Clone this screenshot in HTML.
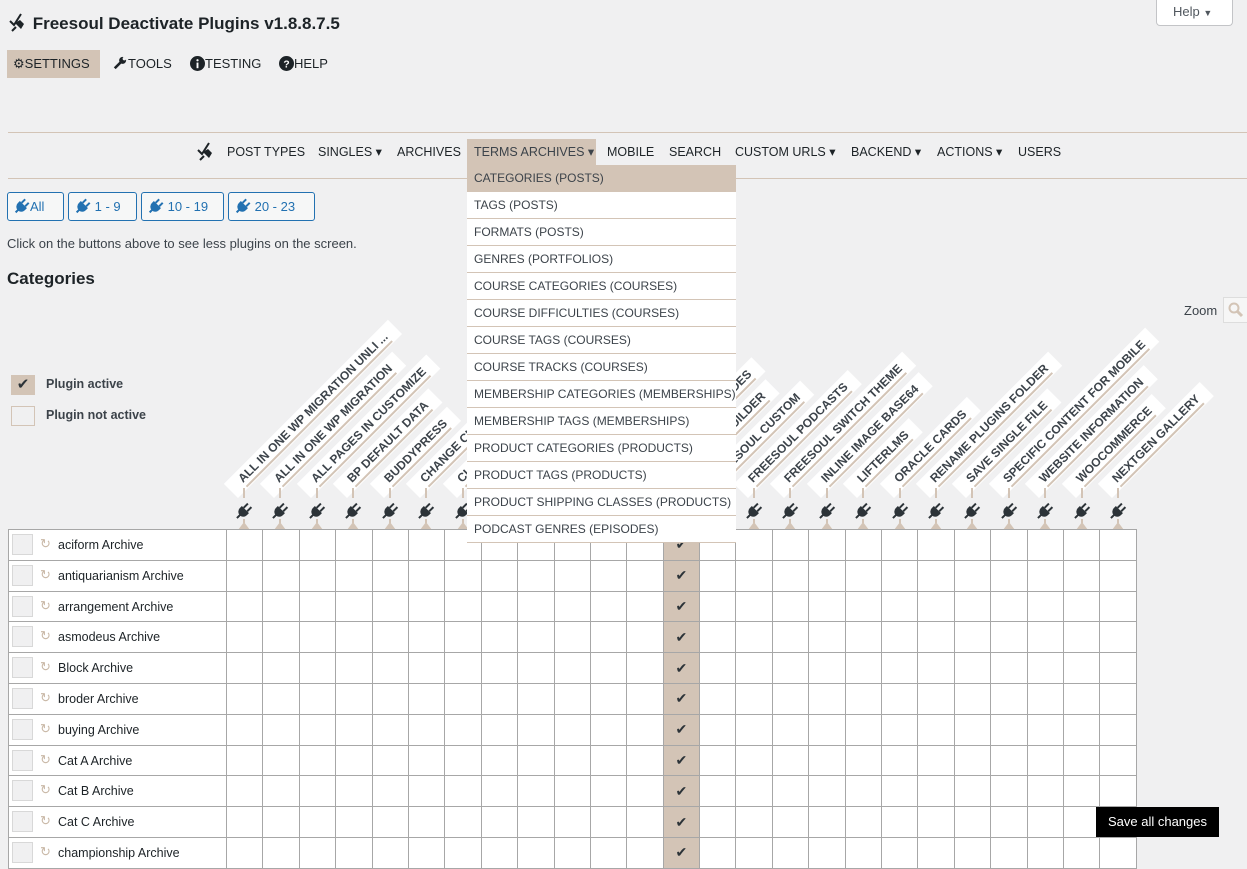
<!DOCTYPE html>
<html><head><meta charset="utf-8"><style>
*{box-sizing:border-box}
body{margin:0;width:1247px;height:851px;overflow:hidden;background:#f0f0f1;font-family:"Liberation Sans",sans-serif;color:#1d2327;position:relative}
.abs{position:absolute}
.title{left:8px;top:12px;font-size:17px;font-weight:bold;color:#1d2327}
.tab{top:50px;height:28px;font-size:13px;line-height:28px;padding:0 6px;color:#1d2327}
.hr{left:8px;right:0;height:1px;background:#d3c4b6}
.nav{top:139px;height:26px;line-height:26px;font-size:12.5px;color:#1d2327}
.btn{top:192px;height:29px;border:1px solid #2271b1;border-radius:3px;background:#f6f7f7;color:#2271b1;font-size:13px;line-height:27px;padding:0 8px 0 6px;white-space:nowrap}
.btn svg{vertical-align:-3px}
.dd{position:absolute;left:467px;top:165px;width:269px;background:#fff;z-index:5}
.dd div{height:27px;line-height:26px;padding-left:7px;font-size:12px;color:#3c434a;border-bottom:1px solid #d3c4b6;white-space:nowrap;overflow:hidden}
.lab{position:absolute;height:20px;background:#fff;transform-origin:0 100%;transform:rotate(-45deg);white-space:nowrap;font-size:12px;font-weight:bold;color:#3c434a;padding:3px 12px 0 14px;line-height:13px}
.lab span{border-bottom:2px solid #d3c4b6;padding-bottom:1px}
table{position:absolute;left:8px;top:529px;border-collapse:collapse;background:#fff}
td{border:1px solid #a7a7a7;width:36.4px;height:30.8px;padding:0;font-size:12.5px;color:#1d2327}
td.n{width:218px;position:relative}
.cb{position:absolute;left:3px;top:4px;width:21px;height:21px;border:1px solid #d8d8d8;background:#f0f0f1}
.rf{position:absolute;left:31px;top:6px;color:#c9b8a6;font-size:13px}
.tx{position:absolute;left:49px;top:8px}
td.on{background:#d3c4b6;text-align:center;font-size:14px;color:#2c3338}
</style></head><body>
<div class="abs title"><svg width="20" height="20" viewBox="0 0 20 20" style="vertical-align:-3px"><path d="M2 9l4 4 7-11" stroke="#1d2327" stroke-width="2" fill="none"/><path d="M7 11l5-3 4 4-3 5z" fill="#1d2327"/><path d="M8 15l-4 4" stroke="#1d2327" stroke-width="2"/></svg> Freesoul Deactivate Plugins v1.8.8.7.5</div>
<div class="abs" style="left:1156px;top:0;width:77px;height:26px;background:#fff;border:1px solid #c3c4c7;border-top:none;border-radius:0 0 4px 4px;font-size:13px;color:#50575e;line-height:24px;padding-left:16px">Help <span style="font-size:9px">▼</span></div>
<div class="abs tab" style="left:7px;width:93px;background:#d3c4b6">⚙SETTINGS</div>
<div class="abs tab" style="left:106px"><svg width="16" height="14" viewBox="0 0 16 16" style="vertical-align:-2px"><path d="M2 14l7-7" stroke="#1d2327" stroke-width="3"/><circle cx="11" cy="5" r="4" fill="#1d2327"/><circle cx="13" cy="3" r="2" fill="#f0f0f1"/></svg>TOOLS</div>
<div class="abs tab" style="left:184px"><svg width="15" height="15" viewBox="0 0 16 16" style="vertical-align:-3px"><circle cx="8" cy="8" r="8" fill="#1d2327"/><rect x="7" y="7" width="2" height="6" fill="#fff"/><circle cx="8" cy="4.5" r="1.2" fill="#fff"/></svg>TESTING</div>
<div class="abs tab" style="left:273px"><svg width="15" height="15" viewBox="0 0 16 16" style="vertical-align:-3px"><circle cx="8" cy="8" r="8" fill="#1d2327"/><text x="8" y="12.5" font-size="11" font-weight="bold" fill="#fff" text-anchor="middle" font-family="Liberation Sans">?</text></svg>HELP</div>
<div class="abs hr" style="top:132px"></div>
<div class="abs hr" style="top:178px"></div>
<div class="abs nav" style="left:196px"><svg width="20" height="20" viewBox="0 0 20 20" style="vertical-align:-5px"><path d="M2 9l4 4 7-11" stroke="#1d2327" stroke-width="2" fill="none"/><path d="M7 11l5-3 4 4-3 5z" fill="#1d2327"/><path d="M8 15l-4 4" stroke="#1d2327" stroke-width="2"/></svg></div>
<div class="abs nav" style="left:227px">POST TYPES</div>
<div class="abs nav" style="left:318px">SINGLES ▾</div>
<div class="abs nav" style="left:397px">ARCHIVES</div>
<div class="abs nav" style="left:467px;width:129px;background:#d3c4b6;padding-left:7px;color:#3c434a">TERMS ARCHIVES ▾</div>
<div class="abs nav" style="left:607px">MOBILE</div>
<div class="abs nav" style="left:669px">SEARCH</div>
<div class="abs nav" style="left:735px">CUSTOM URLS ▾</div>
<div class="abs nav" style="left:851px">BACKEND ▾</div>
<div class="abs nav" style="left:937px">ACTIONS ▾</div>
<div class="abs nav" style="left:1018px">USERS</div>
<div class="abs btn" style="left:7px;width:57px"><svg width="16" height="16" viewBox="0 0 16 16"><g transform="rotate(45 8 8)"><path d="M3 6h10v3a5 5 0 0 1-10 0z" fill="#2271b1"/><rect x="4.5" y="1" width="2" height="5" fill="#2271b1"/><rect x="9.5" y="1" width="2" height="5" fill="#2271b1"/><rect x="7" y="13" width="2" height="4" fill="#2271b1"/></g></svg>All</div>
<div class="abs btn" style="left:68px;width:69px"><svg width="16" height="16" viewBox="0 0 16 16"><g transform="rotate(45 8 8)"><path d="M3 6h10v3a5 5 0 0 1-10 0z" fill="#2271b1"/><rect x="4.5" y="1" width="2" height="5" fill="#2271b1"/><rect x="9.5" y="1" width="2" height="5" fill="#2271b1"/><rect x="7" y="13" width="2" height="4" fill="#2271b1"/></g></svg> 1 - 9</div>
<div class="abs btn" style="left:141px;width:83px"><svg width="16" height="16" viewBox="0 0 16 16"><g transform="rotate(45 8 8)"><path d="M3 6h10v3a5 5 0 0 1-10 0z" fill="#2271b1"/><rect x="4.5" y="1" width="2" height="5" fill="#2271b1"/><rect x="9.5" y="1" width="2" height="5" fill="#2271b1"/><rect x="7" y="13" width="2" height="4" fill="#2271b1"/></g></svg> 10 - 19</div>
<div class="abs btn" style="left:228px;width:87px"><svg width="16" height="16" viewBox="0 0 16 16"><g transform="rotate(45 8 8)"><path d="M3 6h10v3a5 5 0 0 1-10 0z" fill="#2271b1"/><rect x="4.5" y="1" width="2" height="5" fill="#2271b1"/><rect x="9.5" y="1" width="2" height="5" fill="#2271b1"/><rect x="7" y="13" width="2" height="4" fill="#2271b1"/></g></svg> 20 - 23</div>
<div class="abs" style="left:7px;top:236px;font-size:13px;color:#3c434a">Click on the buttons above to see less plugins on the screen.</div>
<div class="abs" style="left:7px;top:269px;font-size:17px;font-weight:bold">Categories</div>
<div class="abs" style="left:1184px;top:303px;font-size:13px;color:#3c434a">Zoom</div>
<div class="abs" style="left:1223px;top:297px;width:26px;height:26px;border:1px solid #ddd;background:#f6f6f6;padding:4px"><svg width="16" height="16" viewBox="0 0 16 16"><circle cx="6" cy="6" r="4.5" stroke="#d3c4b6" stroke-width="2" fill="none"/><path d="M9 9l5 5" stroke="#d3c4b6" stroke-width="3"/></svg></div>
<div class="abs" style="left:11px;top:375px;width:24px;height:20px;background:#d3c4b6;text-align:center;font-size:15px;line-height:20px;color:#2c3338">✔</div>
<div class="abs" style="left:46px;top:377px;font-size:12.5px;font-weight:bold;color:#3c434a">Plugin active</div>
<div class="abs" style="left:11px;top:406px;width:24px;height:20px;border:1px solid #d3c4b6"></div>
<div class="abs" style="left:46px;top:408px;font-size:12.5px;font-weight:bold;color:#3c434a">Plugin not active</div>
<div id="labs"></div>
<div class="dd">
<div style="background:#d3c4b6">CATEGORIES (POSTS)</div><div>TAGS (POSTS)</div><div>FORMATS (POSTS)</div><div>GENRES (PORTFOLIOS)</div><div>COURSE CATEGORIES (COURSES)</div><div>COURSE DIFFICULTIES (COURSES)</div><div>COURSE TAGS (COURSES)</div><div>COURSE TRACKS (COURSES)</div><div>MEMBERSHIP CATEGORIES (MEMBERSHIPS)</div><div>MEMBERSHIP TAGS (MEMBERSHIPS)</div><div>PRODUCT CATEGORIES (PRODUCTS)</div><div>PRODUCT TAGS (PRODUCTS)</div><div>PRODUCT SHIPPING CLASSES (PRODUCTS)</div><div>PODCAST GENRES (EPISODES)</div>
</div>
<table id="t"></table>
<div class="abs" style="left:1096px;top:807px;width:123px;height:30px;background:#000;color:#fff;font-size:13px;line-height:30px;text-align:center;z-index:6">Save all changes</div>
<script>
var names=["ALL IN ONE WP MIGRATION UNLI ...","ALL IN ONE WP MIGRATION","ALL PAGES IN CUSTOMIZE","BP DEFAULT DATA","BUDDYPRESS","CHANGE CHECKOUT","CLASSIC EDITOR","CONTACT FORM 7","DISABLE COMMENTS","DUPLICATE PAGE","FREESOUL DEVELOPER","FREESOUL SHORTCODES","FREESOUL BUILDER","FREESOUL CUSTOM","FREESOUL PODCASTS","FREESOUL SWITCH THEME","INLINE IMAGE BASE64","LIFTERLMS","ORACLE CARDS","RENAME PLUGINS FOLDER","SAVE SINGLE FILE","SPECIFIC CONTENT FOR MOBILE","WEBSITE INFORMATION","WOOCOMMERCE","NEXTGEN GALLERY"];
var h="";
for(var i=0;i<25;i++){var cx=226+36.42*i+18;
h+='<div class="lab" style="left:'+(cx-6)+'px;top:478px"><span>'+names[i]+'</span></div>';
h+='<div class="abs" style="left:'+(cx-1)+'px;top:488px;width:2px;height:10px;background:#d3c4b6"></div>';
h+='<svg class="abs" style="left:'+(cx-9)+'px;top:500px" width="18" height="30" viewBox="0 0 18 30"><path d="M9 19v4" stroke="#d3c4b6" stroke-width="2"/><path d="M3 30l6-8 6 8z" fill="#d3c4b6"/><g transform="rotate(45 9 11)"><path d="M4 9h10v3a5 5 0 0 1-10 0z" fill="#2c3338"/><rect x="5.5" y="3" width="2" height="6" fill="#2c3338"/><rect x="10.5" y="3" width="2" height="6" fill="#2c3338"/><rect x="8" y="16" width="2" height="5" fill="#2c3338"/></g></svg>';}
document.getElementById("labs").innerHTML=h;
var rows=["aciform","antiquarianism","arrangement","asmodeus","Block","broder","buying","Cat A","Cat B","Cat C","championship"];
var t="";
rows.forEach(function(r){t+='<tr><td class="n"><div class="cb"></div><span class="rf">↻</span><span class="tx">'+r+' Archive</span></td>';
for(var i=0;i<25;i++)t+=i==12?'<td class="on">✔</td>':'<td></td>';t+='</tr>';});
document.getElementById("t").innerHTML=t;
</script>
</body></html>
